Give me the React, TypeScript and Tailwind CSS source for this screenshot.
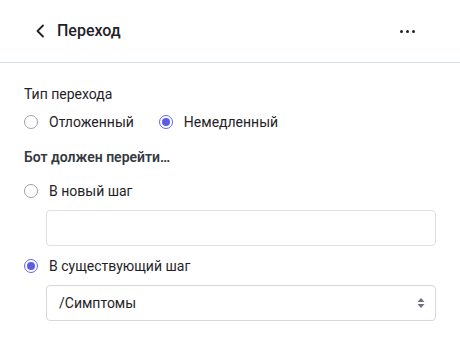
import { useState } from "react";

function Radio({ checked, label, onClick }: { checked: boolean; label: string; onClick?: () => void }) {
  return (
    <label className="flex items-center gap-[11px] cursor-pointer" onClick={onClick}>
      <span
        className={
          checked
            ? "w-[14px] h-[14px] rounded-full border border-[#6366f1] flex items-center justify-center"
            : "w-[14px] h-[14px] rounded-full border border-[#9ca3af]"
        }
      >
        {checked && <span className="w-[8px] h-[8px] rounded-full bg-[#5b5ce6]" />}
      </span>
      <span className="text-sm leading-5 text-[#1f2328]">{label}</span>
    </label>
  );
}

export default function App() {
  const [mode, setMode] = useState("now");
  const [target, setTarget] = useState("existing");

  return (
    <div className="w-[460px] h-[342px] bg-white font-['Roboto',sans-serif] text-[#1f2328]">
      <div className="h-[63px] flex items-center justify-between pl-[35px] pr-[45px] border-b border-[#d5dee6]">
        <div className="flex items-center gap-[12px]">
          <svg width="10" height="14" viewBox="0 0 10 14" fill="none">
            <path d="M8 1.5 L2.5 7 L8 12.5" stroke="#1f2328" strokeWidth="1.8" strokeLinecap="round" strokeLinejoin="round" />
          </svg>
          <span className="text-base font-medium">Переход</span>
        </div>
        <div className="flex items-center gap-[3px]">
          <span className="w-[3px] h-[3px] rounded-full bg-[#1f2328]" />
          <span className="w-[3px] h-[3px] rounded-full bg-[#1f2328]" />
          <span className="w-[3px] h-[3px] rounded-full bg-[#1f2328]" />
        </div>
      </div>

      <div className="pl-[24px] pr-[24px] pt-[21px]">
        <div className="text-sm leading-5">Тип перехода</div>
        <div className="mt-2 flex items-center gap-[25px]">
          <Radio checked={mode === "later"} label="Отложенный" onClick={() => setMode("later")} />
          <Radio checked={mode === "now"} label="Немедленный" onClick={() => setMode("now")} />
        </div>

        <div className="mt-[15px] text-sm leading-5 font-semibold text-[#343a40]">Бот должен перейти…</div>

        <div className="mt-[14px]">
          <Radio checked={target === "new"} label="В новый шаг" onClick={() => setTarget("new")} />
        </div>
        <div className="mt-[9px] ml-[22px] w-[390px] h-[36px] rounded border border-[#dcdfe3]" />

        <div className="mt-[10px]">
          <Radio checked={target === "existing"} label="В существующий шаг" onClick={() => setTarget("existing")} />
        </div>
        <div className="mt-[9px] ml-[22px] w-[390px] h-[36px] rounded border border-[#d5d8dc] flex items-center justify-between pl-[12px] pr-[10px]">
          <span className="text-sm">/Симптомы</span>
          <svg width="8" height="12" viewBox="0 0 8 12">
            <path d="M4 1 L7.5 5 L0.5 5 Z" fill="#6b7280" />
            <path d="M4 11 L7.5 7 L0.5 7 Z" fill="#6b7280" />
          </svg>
        </div>
      </div>
    </div>
  );
}
